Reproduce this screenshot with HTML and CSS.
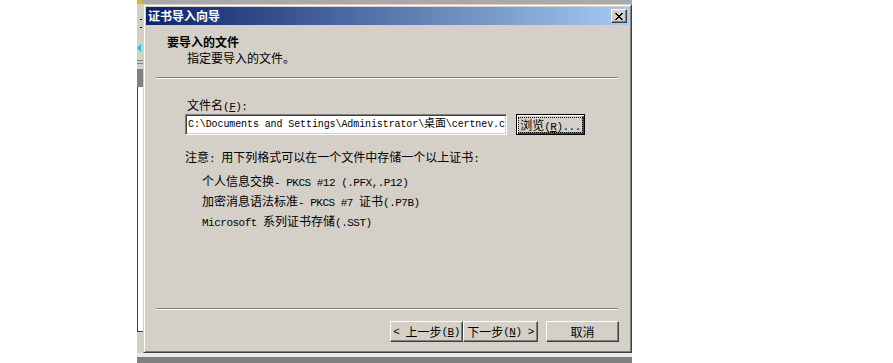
FILE: index.html
```html
<!DOCTYPE html>
<html lang="zh-CN">
<head>
  <meta http-equiv="Content-Type" content="text/html; charset=UTF-8">
  <title>证书导入向导</title>
  <link rel="stylesheet" href="styles.css">
</head>
<body>
  <div class="scene">
    <div class="top-strip"><span class="top-icon"></span></div>
    <div class="middle">
      <div class="behind">
        <div class="behind-tools">
          <span class="tick"></span>
          <span class="tick"></span>
          <span class="arrow"></span>
          <span class="rule"></span>
          <span class="block"></span>
        </div>
        <div class="behind-pane"></div>
        <div class="behind-foot"></div>
      </div>
      <div class="dialog">
        <div class="titlebar">
          <span class="title">证书导入向导</span>
          <button class="close">
            <svg width="8" height="7" viewBox="0 0 8 7" shape-rendering="crispEdges">
              <path d="M0 0h2v1h-2z M6 0h2v1h-2z M1 1h2v1h-2z M5 1h2v1h-2z M2 2h4v1h-4z M3 3h2v1h-2z M2 4h4v1h-4z M1 5h2v1h-2z M5 5h2v1h-2z M0 6h2v1h-2z M6 6h2v1h-2z" fill="#000"/>
            </svg>
          </button>
        </div>
        <div class="header">
          <div class="heading">要导入的文件</div>
          <div class="subheading">指定要导入的文件。</div>
        </div>
        <div class="sep"></div>
        <div class="body">
          <div class="label">文件名<span class="en">(<u>F</u>):</span></div>
          <div class="file-row">
            <div class="field">C:\Documents and Settings\Administrator\<span class="cjk">桌面</span>\certnev.c</div>
            <button class="btn default"><span class="focus">浏览<span class="en">(<u>R</u>)...</span></span></button>
          </div>
          <div class="note">注意<span class="en">: </span>用下列格式可以在一个文件中存储一个以上证书<span class="en">:</span></div>
          <ul class="formats">
            <li>个人信息交换<span class="en">- PKCS #12 (.PFX,.P12)</span></li>
            <li>加密消息语法标准<span class="en">- PKCS #7 </span>证书<span class="en">(.P7B)</span></li>
            <li><span class="en">Microsoft </span>系列证书存储<span class="en">(.SST)</span></li>
          </ul>
        </div>
        <div class="sep"></div>
        <div class="footer">
          <button class="btn back"><span class="en">&lt;&nbsp;</span>上一步<span class="en">(<u>B</u>)</span></button>
          <button class="btn next">下一步<span class="en">(<u>N</u>)&nbsp;&gt;</span></button>
          <button class="btn cancel">取消</button>
        </div>
      </div>
    </div>
    <div class="bottom-strip"></div>
  </div>
</body>
</html>
```

FILE: styles.css
```css
body {
  margin: 0;
  background: #fff;
  font-family: "Noto Sans CJK SC", sans-serif;
  font-size: 12px;
  color: #000;
}
.scene {
  margin-left: 137px;
  width: 495px;
}
.top-strip {
  height: 4px;
  background: #a9a9a9;
}
.top-icon {
  display: block;
  width: 3px;
  height: 4px;
  margin-left: 1px;
  background: #e0c000;
}
.middle {
  display: flex;
}
.behind {
  width: 6px;
  display: flex;
  flex-direction: column;
}
.behind-tools {
  height: 83px;
  background: #d4d0c8;
  display: flex;
  flex-direction: column;
  padding-top: 15px;
  box-sizing: border-box;
}
.tick {
  width: 2px;
  height: 1px;
  margin: 0 0 7px 3px;
  background: #000;
}
.arrow {
  width: 0;
  height: 0;
  margin-top: 9px;
  border-top: 4px solid transparent;
  border-bottom: 4px solid transparent;
  border-right: 4px solid #00c8e8;
}
.rule {
  height: 1px;
  margin-top: 8px;
  background: #808080;
  box-shadow: 0 3px #808080;
}
.block {
  height: 20px;
  margin-top: 8px;
  background: #808080;
}
.behind-pane {
  height: 244px;
  border-left: 1px solid #404040;
  background: #fff;
}
.behind-foot {
  flex: 1;
  border-top: 1px solid #404040;
  background: #d4d0c8;
}
.dialog {
  flex: 1;
  height: 349px;
  box-sizing: border-box;
  display: flex;
  flex-direction: column;
  background: #d4d0c8;
  border: 1px solid;
  border-color: #d4d0c8 #404040 #404040 #d4d0c8;
  box-shadow: inset 1px 1px #fff, inset -1px -1px #808080;
  padding: 2px;
}
.titlebar {
  height: 18px;
  display: flex;
  align-items: center;
  justify-content: space-between;
  background: linear-gradient(to right, #0a246a, #a6caf0);
  padding: 0 2px 0 2px;
}
.title {
  color: #fff;
  font-weight: bold;
  font-size: 12px;
  line-height: 18px;
}
.close {
  width: 16px;
  height: 14px;
  padding: 0;
  display: flex;
  align-items: center;
  justify-content: center;
  background: #d4d0c8;
  border: 1px solid;
  border-color: #fff #404040 #404040 #fff;
  box-shadow: inset -1px -1px #808080;
}
.header {
  padding: 9px 0 11px 21px;
  line-height: 16px;
}
.heading {
  font-weight: bold;
}
.subheading {
  padding-left: 20px;
}
.sep {
  height: 0;
  margin: 0 11px 0 10px;
  border-top: 1px solid #808080;
  border-bottom: 1px solid #fff;
}
.body {
  flex: 1;
  padding: 18px 0 0 39px;
  line-height: 16px;
}
.en {
  font-family: "Liberation Mono", monospace;
  font-size: 11px;
  letter-spacing: -0.5px;
  line-height: 10px;
}
.label {
  margin-left: 2px;
  height: 16px;
}
.file-row {
  display: flex;
  align-items: center;
  gap: 9px;
  margin-top: 1px;
}
.field {
  width: 322px;
  height: 21px;
  box-sizing: border-box;
  padding: 0 2px;
  background: #fff;
  border: 1px solid;
  border-color: #808080 #fff #fff #808080;
  box-shadow: inset 1px 1px #404040, inset -1px -1px #d4d0c8;
  font-family: "Liberation Mono", monospace;
  font-size: 10px;
  letter-spacing: -0.1px;
  line-height: 19px;
  white-space: nowrap;
  overflow: hidden;
}
.cjk {
  font-family: "Noto Sans CJK SC", sans-serif;
  font-size: 11px;
  line-height: 10px;
}
.btn {
  height: 21px;
  padding: 0;
  background: #d4d0c8;
  border: 1px solid;
  border-color: #fff #404040 #404040 #fff;
  box-shadow: inset -1px -1px #808080, inset 1px 1px #d4d0c8;
  font-family: "Noto Sans CJK SC", sans-serif;
  font-size: 12px;
  line-height: 16px;
  color: #000;
  display: flex;
  align-items: center;
  justify-content: center;
}
.btn.default {
  width: 69px;
  border-color: #000;
  box-shadow: inset 1px 1px #fff, inset -1px -1px #404040, inset -2px -2px #808080;
}
.focus {
  outline: 1px dotted #000;
  padding: 0 1px;
  line-height: 13px;
}
.note {
  margin-top: 14px;
  height: 16px;
}
.formats {
  list-style: none;
  margin: 6px 0 0;
  padding: 0 0 0 17px;
}
.formats li {
  height: 20px;
  line-height: 20px;
}
.footer {
  display: flex;
  padding: 11px 10px 8px 0;
  justify-content: flex-end;
}
.back {
  width: 73px;
}
.next {
  width: 75px;
}
.cancel {
  width: 73px;
  margin-left: 8px;
}
.bottom-strip {
  height: 10px;
  box-sizing: border-box;
  border-top: 4px solid #ece9e4;
  background: #808080;
}
```
